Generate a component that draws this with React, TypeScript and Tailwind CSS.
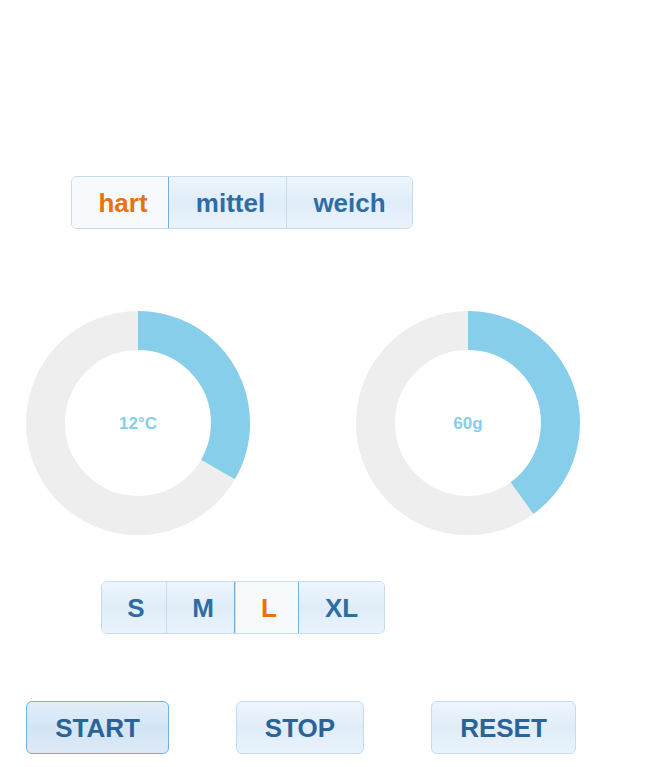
import { FC } from "react";

const seg =
  "flex items-center justify-center h-full pt-[2px] border-l border-[#c5dbef] first:border-l-0 bg-gradient-to-b from-[#eef5fc] via-[#dfedf9] to-[#eaf3fc] text-[#2e6da4]";
const active = "bg-none bg-[#f7fafd] text-[#e6730f] outline outline-1 outline-[#72b0e2] z-10";

interface SegProps {
  items: { label: string; w: number; shift?: number }[];
  selected: number;
}

const Segmented: FC<SegProps> = ({ items, selected }) => (
  <div className="flex h-[53px] rounded-[6px] border border-[#c5dbef] overflow-hidden w-fit font-bold text-[26px]">
    {items.map((it, i) => (
      <div
        key={it.label}
        style={{ width: it.w, paddingLeft: it.shift ?? 0 }}
        className={`relative ${seg} ${i === selected ? active : ""}`}
      >
        {it.label}
      </div>
    ))}
  </div>
);

const Donut: FC<{ value: number; label: string }> = ({ value, label }) => {
  const r = 92.5;
  const c = 2 * Math.PI * r;
  return (
    <div className="relative w-[224px] h-[224px]">
      <svg width="224" height="224" viewBox="0 0 224 224">
        <circle cx="112" cy="112" r={r} fill="none" stroke="#eeeeee" strokeWidth="39" />
        <circle
          cx="112"
          cy="112"
          r={r}
          fill="none"
          stroke="#87ceeb"
          strokeWidth="39"
          strokeDasharray={`${c * value} ${c}`}
          transform="rotate(-90 112 112)"
        />
      </svg>
      <div className="absolute inset-0 flex items-center justify-center pt-[2px] text-[17px] font-bold text-[#87ceeb]">
        {label}
      </div>
    </div>
  );
};

const Btn: FC<{ label: string; w: number; pressed?: boolean }> = ({ label, w, pressed }) => (
  <button
    style={{ width: w }}
    className={`h-[53px] pt-[2px] rounded-[6px] border font-bold text-[26px] text-[#2b6397] ${
      pressed
        ? "border-[#72b0e2] bg-gradient-to-b from-[#e2eef9] via-[#d3e5f5] to-[#dce9f6]"
        : "border-[#c5dbef] bg-gradient-to-b from-[#eef5fc] via-[#dfedf9] to-[#eaf3fc]"
    }`}
  >
    {label}
  </button>
);

export default function App() {
  return (
    <div className="w-[656px] h-[767px] bg-white font-['Liberation_Sans',Arial,sans-serif] flex flex-col pt-[176px]">
      <div className="pl-[71px]">
        <Segmented
          selected={0}
          items={[
            { label: "hart", w: 96, shift: 6 },
            { label: "mittel", w: 118, shift: 6 },
            { label: "weich", w: 126 },
          ]}
        />
      </div>
      <div className="flex pl-[26px] gap-[106px] mt-[82px]">
        <Donut value={1 / 3} label="12°C" />
        <Donut value={0.4} label="60g" />
      </div>
      <div className="pl-[101px] mt-[46px]">
        <Segmented
          selected={2}
          items={[
            { label: "S", w: 64, shift: 4 },
            { label: "M", w: 69, shift: 4 },
            { label: "L", w: 63, shift: 4 },
            { label: "XL", w: 86 },
          ]}
        />
      </div>
      <div className="flex pl-[26px] mt-[67px]">
        <Btn label="START" w={143} pressed />
        <div className="ml-[67px]">
          <Btn label="STOP" w={128} />
        </div>
        <div className="ml-[67px]">
          <Btn label="RESET" w={145} />
        </div>
      </div>
    </div>
  );
}
